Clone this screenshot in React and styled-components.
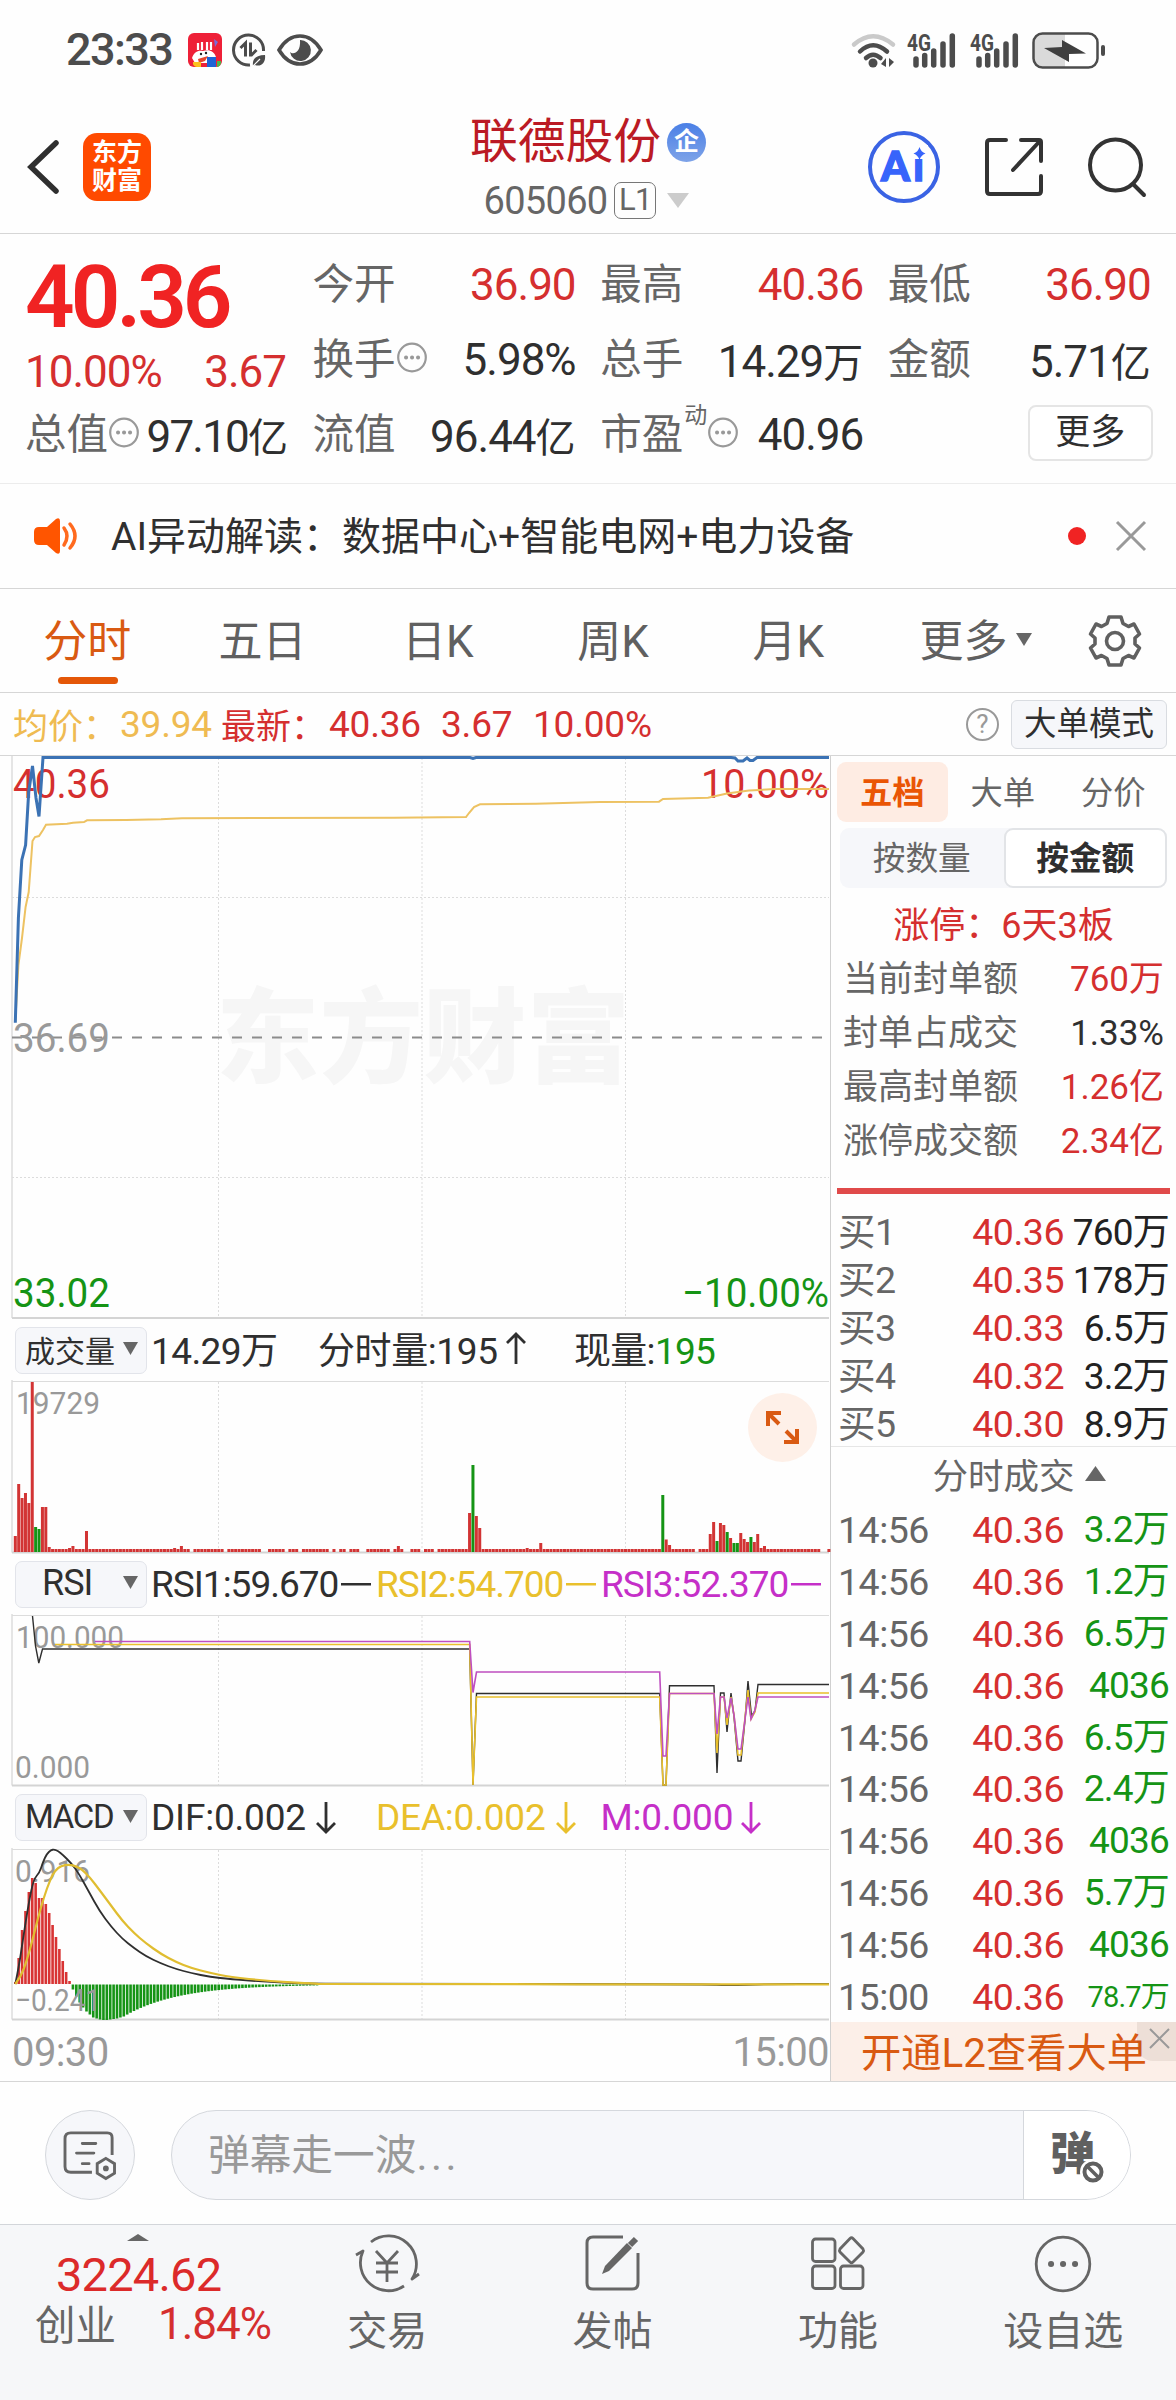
// src/App.jsx
import React from 'react';
import styled, { createGlobalStyle } from 'styled-components';

const RED = '#d52f2f';
const GREEN = '#159415';
const ORANGE = '#d95a12';
const YELLOW = '#e9c02c';
const PURPLE = '#c52fc8';
const DARK = '#2f2f2f';
const GREY = '#666';
const LIGHT = '#999';

const GlobalStyle = createGlobalStyle`
  * { box-sizing: border-box; }
  body {
    margin: 0;
    background: #fff;
    font-family: Roboto, 'Noto Sans CJK SC', sans-serif;
    color: ${DARK};
  }
  svg { display: block; flex: none; overflow: visible; }
`;

const Page = styled.div`
  width: 1176px;
  height: 2400px;
  overflow: hidden;
  background: #fefefe;
  white-space: nowrap;
`;

/* ---------- status bar ---------- */

const StatusBar = styled.div`
  display: flex;
  align-items: center;
  justify-content: space-between;
  height: 100px;
  padding: 0 70px 0 66px;
`;

const StatusGroup = styled.div`
  display: flex;
  align-items: center;
  gap: ${(p) => p.$gap || 10}px;
`;

const Clock = styled.span`
  font-size: 45px;
  letter-spacing: -1.6px;
  font-weight: 500;
  color: #4c4c4c;
  margin-right: 6px;
  line-height: 50px;
`;

/* ---------- header ---------- */

const Header = styled.header`
  display: grid;
  grid-template-columns: 1fr auto 1fr;
  align-items: center;
  height: 134px;
  padding: 0 29px 0 26px;
  border-bottom: 1px solid #d6d6d6;
`;

const HeaderLeft = styled.div`
  display: flex;
  align-items: center;
  gap: 23px;
`;

const Logo = styled.div`
  display: flex;
  flex-direction: column;
  align-items: center;
  justify-content: center;
  width: 68px;
  height: 68px;
  border-radius: 14px;
  background: #ff4a00;
  color: #fff;
  font-size: 25px;
  font-weight: 700;
  line-height: 28px;
`;

const HeaderTitle = styled.div`
  display: flex;
  flex-direction: column;
  align-items: center;
  align-self: start;
  padding-top: 11px;
`;

const NameLine = styled.div`
  display: flex;
  align-items: center;
  gap: 6px;
  height: 60px;
  padding-left: 3px;
  font-size: 47.8px;
  line-height: 54px;
  color: #bb1a24;
`;

const Name = styled.span`
  margin-top: 1px;
`;

const FirmBadge = styled.span`
  width: 39px;
  height: 39px;
  margin-top: 2px;
  border-radius: 50%;
  background: linear-gradient(#4b80e6, #7ea3e8);
  color: #fff;
  font-size: 25px;
  font-weight: 700;
  line-height: 37px;
  text-align: center;
`;

const CodeLine = styled.div`
  display: flex;
  align-items: center;
  height: 59px;
  font-size: 38px;
  letter-spacing: -0.7px;
  color: ${GREY};
`;

const Level = styled.span`
  width: 42px;
  height: 37px;
  margin: 0 11px 0 7px;
  border: 1.5px solid #777;
  border-radius: 7px;
  font-size: 31px;
  line-height: 34px;
  text-align: center;
`;

const HeaderRight = styled.div`
  display: flex;
  align-items: center;
  justify-content: flex-end;
  gap: 45px;
`;

/* ---------- quote summary ---------- */

const Quote = styled.section`
  display: grid;
  grid-template-columns: repeat(4, 262px);
  grid-template-rows: repeat(3, 75px);
  column-gap: 25.6px;
  height: 250px;
  padding: 13px 25px 0;
  border-bottom: 1px solid #ececec;
`;

const PriceBlock = styled.div`
  grid-row: span 2;
`;

const Price = styled.div`
  height: 99px;
  font-size: 87px;
  font-weight: 600;
  line-height: 100px;
  letter-spacing: -4px;
  color: #f02323;
`;

const ChangeLine = styled.div`
  display: flex;
  justify-content: space-between;
  height: 51px;
  padding-right: 1px;
  font-size: 44px;
  line-height: 53px;
  letter-spacing: -1px;
  color: ${RED};
`;

const Cell = styled.div`
  display: flex;
  align-items: center;
  color: ${GREY};
`;

const CellName = styled.span`
  height: 66px;
  font-size: 41.5px;
  line-height: 66px;
`;

const CellValue = styled.span`
  margin: 1px -1px 0 auto;
  font-size: 44px;
  letter-spacing: ${(p) => p.$spacing || -1}px;
  color: ${(p) => p.$color || DARK};
`;

const Unit = styled.span`
  font-size: 40px;
  letter-spacing: 0;
`;

const Sup = styled.sup`
  align-self: flex-start;
  margin: 4px 0 0 1px;
  font-size: 23px;
  line-height: 30px;
`;

const MoreButton = styled.button`
  align-self: center;
  justify-self: end;
  width: 125px;
  height: 56px;
  margin: -3px -3px 0 0;
  padding: 0;
  border: 2px solid #e5e5e5;
  border-radius: 8px;
  background: #fff;
  font: 35px Roboto, 'Noto Sans CJK SC', sans-serif;
  line-height: 46px;
  color: ${DARK};
`;

/* ---------- notice ---------- */

const Notice = styled.div`
  display: flex;
  align-items: center;
  height: 105px;
  padding: 0 30px 0 33px;
  border-bottom: 1px solid #d6d6d6;
  font-size: 39px;
`;

const NoticeText = styled.span`
  margin: -7px 0 0 32px;
`;

const Dot = styled.i`
  width: 18px;
  height: 18px;
  margin: 0 30px 0 auto;
  border-radius: 50%;
  background: #f02323;
`;

/* ---------- period tabs ---------- */

const Periods = styled.nav`
  display: flex;
  align-items: center;
  height: 104px;
  border-bottom: 1px solid #d6d6d6;
`;

const Period = styled.span`
  position: relative;
  display: flex;
  align-items: center;
  justify-content: center;
  gap: 9px;
  width: ${(p) => p.$width || 175.3}px;
  height: 100%;
  padding: 0 1px 5px 0;
  font-size: 44px;
  color: ${(p) => (p.$active ? ORANGE : '#606060')};

  svg {
    margin-top: 3px;
  }

  &::after {
    content: '';
    display: ${(p) => (p.$active ? 'block' : 'none')};
    position: absolute;
    bottom: 8px;
    left: 57.5px;
    width: 60px;
    height: 7px;
    border-radius: 4px;
    background: #e45708;
  }
`;

const Gear = styled.svg`
  margin-left: 11px;
`;

const InfoBar = styled.div`
  display: flex;
  align-items: center;
  height: 63px;
  padding: 0 9px 0 13px;
  border-bottom: 1px solid #d6d6d6;
  font-size: 37px;
  color: ${RED};
`;

const InfoLabel = styled.span`
  width: ${(p) => p.$width}px;
  margin-top: -2px;
  font-size: 35px;
  color: ${(p) => p.$color};
`;

const InfoValue = styled.span`
  width: ${(p) => p.$width}px;
  letter-spacing: -0.2px;
  color: ${(p) => p.$color};
`;

const Help = styled.span`
  width: 33px;
  height: 33px;
  margin: 0 12px 0 auto;
  border: 2.5px solid ${LIGHT};
  border-radius: 50%;
  font-size: 26px;
  line-height: 28px;
  text-align: center;
  color: ${LIGHT};
`;

const ModeButton = styled.span`
  width: 156px;
  height: 49px;
  border: 1px solid #d9dce1;
  border-radius: 6px;
  background: #f6f7fa;
  font-size: 32.5px;
  line-height: 47px;
  text-align: center;
  color: ${DARK};
`;

/* ---------- main area ---------- */

const Main = styled.main`
  display: flex;
  height: 1326px;
  border-bottom: 1px solid #d6d6d6;
`;

const Charts = styled.div`
  width: 831px;
  border-right: 1px solid #d0d0d0;
`;

const ChartBox = styled.div`
  position: relative;
`;

const IndicatorBar = styled.div`
  display: flex;
  align-items: center;
  height: ${(p) => p.$height || 60}px;
  padding-left: 15px;
  font-size: 37px;
`;

const Picker = styled.span`
  display: flex;
  align-items: center;
  justify-content: space-between;
  width: 132px;
  height: 47px;
  margin-right: 4px;
  padding: 0 8px 3px ${(p) => p.$pad || 9}px;
  border: 1.5px solid #e2e4ea;
  border-radius: 7px;
  background: #f6f7fa;
  font-size: ${(p) => p.$size || 35}px;
  letter-spacing: ${(p) => p.$spacing || 0}px;
`;

const Reading = styled.span`
  display: flex;
  align-items: center;
  gap: ${(p) => p.$gap || 4}px;
  width: ${(p) => p.$width}px;
  margin-top: ${(p) => p.$lift || 0}px;
  letter-spacing: ${(p) => p.$spacing || 0}px;
  color: ${(p) => p.$color};
`;

const GreenText = styled.span`
  color: ${GREEN};
`;

const ExpandButton = styled.span`
  position: absolute;
  top: 13px;
  right: 13px;
  width: 69px;
  height: 69px;
  padding: 17px;
  border-radius: 50%;
  background: #fef0e8;
`;

const TimeAxis = styled.div`
  display: flex;
  align-items: center;
  justify-content: space-between;
  height: 60px;
  padding: 2px 1px 0 12px;
  font-size: 40px;
  letter-spacing: -0.6px;
  color: ${LIGHT};
`;

/* ---------- order book ---------- */

const Book = styled.aside`
  flex: 1;
  display: flex;
  flex-direction: column;
`;

const BookTabs = styled.div`
  display: flex;
  padding: 6px 6px 0;
`;

const BookTab = styled.span`
  width: 110.5px;
  height: 60px;
  border-radius: 9px;
  background: ${(p) => (p.$active ? '#feece3' : 'none')};
  font-size: 32.3px;
  font-weight: ${(p) => (p.$active ? 700 : 400)};
  line-height: 62px;
  text-align: center;
  color: ${(p) => (p.$active ? '#ea5504' : GREY)};
`;

const Segment = styled.div`
  display: flex;
  width: 327px;
  margin: 6px 0 0 9px;
  border-radius: 9px;
  background: #f6f7fa;
`;

const SegmentItem = styled.span`
  flex: 1;
  height: 60px;
  border: 2px solid ${(p) => (p.$active ? '#e2e4e7' : 'transparent')};
  border-radius: 9px;
  background: ${(p) => (p.$active ? '#fff' : 'none')};
  font-size: 32.7px;
  font-weight: ${(p) => (p.$active ? 700 : 400)};
  line-height: 59px;
  text-align: center;
  color: ${(p) => (p.$active ? DARK : GREY)};
`;

const LimitLine = styled.div`
  height: 52px;
  margin-top: 12px;
  font-size: 36px;
  line-height: 53px;
  text-align: center;
  color: ${RED};
`;

const StatRow = styled.div`
  display: flex;
  justify-content: space-between;
  height: 54px;
  padding: 0 12px 0 12px;
  font-size: 35px;
  line-height: 56px;
  color: ${GREY};
`;

const StatValue = styled.span`
  color: ${(p) => p.$color};
`;

const Ratio = styled.div`
  width: 333px;
  height: 6px;
  margin: 20px 0 14px 6px;
  background: #e04a4a;
`;

const Rows = styled.div`
  height: ${(p) => p.$height}px;
`;

const BookRow = styled.div`
  display: grid;
  grid-template-columns: 122px 104px 1fr;
  height: ${(p) => p.$height}px;
  padding: 0 7px 0 7px;
  font-size: 37.5px;
  line-height: ${(p) => p.$height + 1}px;
  letter-spacing: -0.5px;
  color: ${GREY};
`;

const BookPrice = styled.span`
  text-align: right;
  color: ${RED};
`;

const BookVolume = styled.span`
  text-align: right;
  font-size: ${(p) => p.$size || 37}px;
  letter-spacing: -0.8px;
  color: ${(p) => p.$color};
`;

const TradesTitle = styled.div`
  display: flex;
  align-items: center;
  justify-content: center;
  gap: 10px;
  height: 58px;
  padding: 0 0 5px 31px;
  border-top: 1px solid #e6e6e6;
  font-size: 35.5px;
  color: ${GREY};
`;

const Promo = styled.div`
  position: relative;
  height: 59px;
  padding-left: 30px;
  background: #fcefe8;
  font-size: 40.3px;
  line-height: 64px;
  color: ${ORANGE};
`;

const PromoClose = styled.span`
  position: absolute;
  top: 0;
  right: 0;
  width: 39px;
  height: 39px;
  padding: 6px 0 0 12px;
  border-bottom-left-radius: 16px;
  background: rgba(60, 40, 30, 0.08);
`;

/* ---------- comment bar and bottom nav ---------- */

const CommentBar = styled.div`
  display: flex;
  align-items: center;
  height: 143px;
  padding: 4px 45px 0;
  border-bottom: 1px solid #d3d6da;
`;

const RoundButton = styled.span`
  display: flex;
  align-items: center;
  justify-content: center;
  width: 90px;
  height: 90px;
  border: 1.5px solid #d5d8dd;
  border-radius: 50%;
  background: #f6f7fa;
`;

const Field = styled.div`
  display: flex;
  flex: 1;
  height: 90px;
  margin-left: 36px;
  border: 1.5px solid #d5d8dd;
  border-radius: 45px;
  background: #f6f7fa;
  overflow: hidden;
`;

const Placeholder = styled.span`
  flex: 1;
  padding-left: 36px;
  font-size: 41.7px;
  line-height: 90px;
  color: ${LIGHT};
`;

const Ellipsis = styled.span`
  letter-spacing: 3.5px;
`;

const Toggle = styled.span`
  position: relative;
  width: 107px;
  padding-left: 26px;
  border-left: 1.5px solid #d5d8dd;
  background: #fff;
  font-size: 45px;
  font-weight: 900;
  line-height: 88px;
  color: #606060;
`;

const BanIcon = styled.svg`
  position: absolute;
  left: 56px;
  top: 48px;
`;

const BottomNav = styled.nav`
  display: flex;
  height: 175px;
  background: #f6f7f9;
`;

const IndexBox = styled.div`
  width: 274px;
  padding-top: 9px;
`;

const Arrow = styled.svg`
  margin-left: 127px;
`;

const IndexValue = styled.div`
  height: 66px;
  padding-left: 56px;
  font-size: 47px;
  line-height: 68px;
  letter-spacing: -0.8px;
  color: #dc2a2a;
`;

const IndexLine = styled.div`
  display: flex;
  align-items: center;
  height: 31px;
  padding-left: 35px;
  font-size: 40.5px;
  color: ${GREY};
`;

const IndexChange = styled.span`
  margin: 3px 0 0 42px;
  font-size: 44px;
  letter-spacing: -1px;
  color: ${RED};
`;

const NavItem = styled.div`
  display: flex;
  flex-direction: column;
  align-items: center;
  width: 225.4px;
  padding: 8px 0 0 1px;
  font-size: 40px;
  line-height: 56px;
  color: ${GREY};
`;

const NavLabel = styled.span`
  margin-top: 11px;
`;

/* ---------- data ---------- */

const periods = ['分时', '五日', '日K', '周K', '月K'];

const stats = [
  ['当前封单额', '760万', RED],
  ['封单占成交', '1.33%', DARK],
  ['最高封单额', '1.26亿', RED],
  ['涨停成交额', '2.34亿', RED],
];

const bids = [
  ['买1', '40.36', '760万'],
  ['买2', '40.35', '178万'],
  ['买3', '40.33', '6.5万'],
  ['买4', '40.32', '3.2万'],
  ['买5', '40.30', '8.9万'],
];

const trades = [
  ['14:56', '3.2万'],
  ['14:56', '1.2万'],
  ['14:56', '6.5万'],
  ['14:56', '4036'],
  ['14:56', '6.5万'],
  ['14:56', '2.4万'],
  ['14:56', '4036'],
  ['14:56', '5.7万'],
  ['14:56', '4036'],
  ['15:00', '78.7万'],
];

const STEP = 3.39;
const barX = (i) => 15.3 + i * STEP;
const GRID_X = [218.5, 422, 625.5];

const priceLine =
  '15.3,266.7 18.4,162 21.8,104 25.6,89 28.7,36 32.5,10 36,42 39,60.5 43,1.5 470,1.5 473,2.5 476,1.5 731,1.5 735,2 738,5 743,5 747,2 750,4.5 753,4.5 757,1.5 829,1.5';
const avgLine =
  '15.3,266 18.4,209 22,182 25.6,151 28.7,136 32.5,85 35,81 39,80 43,74 46,68.7 67,67.7 73,66.7 84,66 87,64.3 126,64 161,63.3 182,62.3 394,61.7 466,61 469,57 474,51 480,48.3 536,47.7 600,46 659,45.7 663,43 708,41.7 727,37.4 749,34.6 775,33 829,33';

const rsiBlack =
  '32.5,2 35.5,32 38.8,49 42.5,35 469.7,35 473,171 476.5,79.5 659.7,79.5 663,171 666,171 669.5,71.7 714,71.7 717,159 720.5,79 724,79 727,118 731,79 734,103 738,147 741,147 745,106 748,67 751.5,102 755,97 758,70.5 829,70.5';
const rsiYellow =
  '55,30.5 469.7,30.5 473,171 476.5,83 659.7,83 663,171 666,171 669.5,79.5 714,79.5 717,139 720.5,83 724,83 727,111 731,83 734,101 738,141 741,141 748,76 751,105 755,98 758,79 829,79';
const rsiPurple =
  '95,27.5 469.7,27.5 473,78.5 476.5,58 659.7,58 663,142 666,142 669.5,79.5 714,79.5 717,120 720.5,83 724,83 727,104 731,84 734,101 738,135 741,135 748,83 751,105 755,96 758,83 829,83';

// bar index -> [height, is green]
const volumes = {
  0: [16], 1: [68], 2: [54], 3: [59], 4: [49], 5: [170], 6: [25, 1], 7: [23, 1], 8: [45], 9: [45],
  10: [5], 16: [4], 17: [6], 21: [21], 47: [4], 49: [6], 113: [6],
  134: [39], 135: [87, 1], 136: [36], 137: [24], 151: [4], 155: [9],
  191: [57, 1], 192: [12.5], 193: [7],
  205: [18], 206: [30], 207: [11, 1], 208: [29], 209: [27], 210: [20, 1], 211: [14],
  212: [9, 1], 213: [9, 1], 214: [19], 215: [13], 216: [10], 217: [15, 1], 218: [10],
  219: [18], 220: [4], 221: [6],
};
const noVolume = [52, 62, 73, 74, 80, 84, 93, 95, 98, 102, 103, 111, 115, 116, 120, 124, 201, 238, 239];

const macdUp = [2, 26, 54, 73, 92, 106, 101, 86, 86, 80, 71, 59, 47, 35, 23, 12, 3];
const macdDown = [5, 12, 18, 23, 27, 30, 33, 34, 35, 35.5, 35.5, 35, 34.5, 34, 33];
for (let i = 32; i < 90; i += 1) macdDown.push(32 * Math.exp(-(i - 32) / 16));

const dif = [
  [15.3, 136], [19, 118], [23, 91], [28.7, 55], [33.7, 31], [39.4, 25], [43, 14], [46.7, 6], [51, 2],
  [54.3, 1.5], [58, 3], [63, 7], [71, 15], [78.5, 25], [89, 44], [99.5, 63], [111, 78.5], [122.5, 91],
  [134, 100], [145.5, 108], [161, 115.5], [176, 121], [191, 125], [210.5, 129], [230, 131],
  [268, 134], [306, 135.5], [345, 136], [708, 136], [725, 137.5], [770, 136], [829, 136],
];
const dea = [
  [15.3, 136], [21, 128.5], [27, 112], [32.5, 92], [38, 70], [44, 49], [50, 32], [55.5, 22], [61, 18],
  [69, 16.3], [76.5, 18.5], [82, 21.5], [90, 29.5], [99.5, 42], [111, 57.5], [122.5, 73], [134, 85],
  [145.5, 95], [161, 106], [176, 114], [191, 120], [210.5, 125], [230, 129], [268, 133], [306, 135.3],
  [330, 136.3], [829, 136.3],
];

// smooth curve through the midpoints of neighbouring points
const curve = (pts) => {
  let d = `M${pts[0][0]} ${pts[0][1]}`;
  for (let i = 1; i < pts.length - 1; i += 1) {
    const [x, y] = pts[i];
    const [nx, ny] = pts[i + 1];
    d += ` Q${x} ${y} ${(x + nx) / 2} ${(y + ny) / 2}`;
  }
  const last = pts[pts.length - 1];
  return `${d} L${last[0]} ${last[1]}`;
};

/* ---------- small drawings ---------- */

const Triangle = ({ w, h, up, color = GREY }) => (
  <svg width={w} height={h}>
    <path d={up ? `M0 ${h}H${w}L${w / 2} 0z` : `M0 0H${w}L${w / 2} ${h}z`} fill={color} />
  </svg>
);

const MoreDots = () => (
  <svg width="30" height="34" viewBox="-1 -2 30 34" fill="none" stroke={LIGHT}>
    <circle cx="15" cy="12.5" r="13.8" strokeWidth="2.2" />
    <path d="M9 12.5h.1M15 12.5h.1M21 12.5h.1" strokeWidth="4" strokeLinecap="round" />
  </svg>
);

const Cross = ({ size, width = 2.5 }) => (
  <svg width={size} height={size} viewBox={`0 0 ${size} ${size}`} stroke={LIGHT} strokeWidth={width}>
    <path d={`M1 1L${size - 1} ${size - 1}M${size - 1} 1L1 ${size - 1}`} />
  </svg>
);

const TrendArrow = ({ color, up }) => (
  <svg width="20" height="32" viewBox="0 0 20 32" fill="none" stroke={color} strokeWidth="2.8">
    <path d={up ? 'M10 32V2M1 11l9-9 9 9' : 'M10 0v30M1 21l9 9 9-9'} />
  </svg>
);

const Signal = () => (
  <svg width="52" height="35" viewBox="0 0 52 35">
    <text x="1" y="17.5" fontSize="23" fontWeight="700" fill="#4c4c4c" textLength="24" lengthAdjust="spacingAndGlyphs">
      4G
    </text>
    <path d="M10 26v6M18.7 22.5v9.5M27.7 18v14M37 11v21M46.3 3v29" stroke="#4c4c4c" strokeWidth="5.5" strokeLinecap="round" />
  </svg>
);

const Grid = ({ height, bottom }) => (
  <g stroke="#dcdcdc" strokeWidth="1">
    {GRID_X.map((x) => (
      <path key={x} d={`M${x} 2V${bottom}`} strokeDasharray="2 2" />
    ))}
    <path d={`M12 0V${bottom}`} strokeWidth="1.5" />
    <path d={`M12 ${bottom}H829`} strokeWidth="2" stroke="#d4d4d4" />
    {height && <path d="M12 1.5H829" />}
  </g>
);

const Label = ({ x, y, w, size = 31.5, color = LIGHT, children }) => (
  <text x={x} y={y} fontSize={size} fill={color} textLength={w} lengthAdjust="spacingAndGlyphs">
    {children}
  </text>
);

const PriceChart = () => (
  <svg width="830" height="564" fill="none">
    <text x="216" y="319" fontSize="103" fontWeight="900" fill="#f6f6f6" textLength="414">
      东方财富
    </text>
    <Grid bottom={562} />
    <path d="M12 141.5H829M12 421.5H829" stroke="#dcdcdc" strokeDasharray="2 2" />
    <path d="M12 281.5H829" stroke="#8c8c8c" strokeWidth="2" strokeDasharray="10 10" />
    <Label x={13} y={42} w={97} size={41} color={RED}>40.36</Label>
    <Label x={701} y={42} w={128} size={41} color={RED}>10.00%</Label>
    <Label x={13} y={296} w={97} size={41}>36.69</Label>
    <Label x={13} y={551} w={97} size={41} color={GREEN}>33.02</Label>
    <Label x={682} y={551} w={147} size={41} color={GREEN}>−10.00%</Label>
    <polyline points={avgLine} stroke="#edc262" strokeWidth="2" />
    <polyline points={priceLine} stroke="#3b72b4" strokeWidth="3" />
  </svg>
);

const VolumeChart = () => (
  <svg width="830" height="174">
    <Grid height={174} bottom={172.5} />
    <Label x={16} y={34} w={84}>19729</Label>
    {Array.from({ length: 241 }, (_, i) => {
      if (noVolume.includes(i)) return null;
      const [h, green] = volumes[i] || [3];
      return (
        <rect key={i} x={barX(i) - 1.5} y={172 - h} width="3" height={h} fill={green ? GREEN : '#d23434'} />
      );
    })}
  </svg>
);

const RsiChart = () => (
  <svg width="830" height="173" fill="none">
    <Grid height={173} bottom={171.5} />
    <Label x={16} y={34} w={108}>100.000</Label>
    <Label x={15} y={164} w={75}>0.000</Label>
    <polyline points={rsiBlack} stroke={DARK} strokeWidth="1.4" />
    <polyline points={rsiYellow} stroke={YELLOW} strokeWidth="1.6" />
    <polyline points={rsiPurple} stroke="#bf4fc0" strokeWidth="1.6" />
  </svg>
);

const MacdChart = () => (
  <svg width="830" height="173" fill="none">
    <Grid height={173} bottom={171.5} />
    {macdUp.map((h, i) => (
      <rect key={i} x={barX(i) - 1.3} y={136 - h} width="2.6" height={h} fill="#d83434" />
    ))}
    {macdDown.map((h, i) => (
      <rect key={i} x={barX(i + 17) - 1.3} y="136.5" width="2.6" height={h} fill={GREEN} />
    ))}
    <Label x={15} y={34} w={75}>0.916</Label>
    <Label x={15} y={163} w={86}>−0.241</Label>
    <path d={curve(dif)} stroke={DARK} strokeWidth="1.8" />
    <path d={curve(dea)} stroke="#e0bd30" strokeWidth="2.2" />
  </svg>
);

const Value = ({ text, color, spacing }) => {
  const unit = /[万亿]$/.test(text) ? text.slice(-1) : '';
  return (
    <CellValue $color={color} $spacing={spacing}>
      {unit ? text.slice(0, -1) : text}
      {unit && <Unit>{unit}</Unit>}
    </CellValue>
  );
};

const Stat = ({ name, sup, dots, ...value }) => (
  <Cell>
    <CellName>{name}</CellName>
    {sup && <Sup>{sup}</Sup>}
    {dots && <MoreDots />}
    <Value {...value} />
  </Cell>
);

/* ---------- sections ---------- */

const Status = () => (
  <StatusBar>
    <StatusGroup>
      <Clock>23:33</Clock>
      <svg width="34" height="34" viewBox="0 0 34 34">
        <rect width="34" height="34" rx="6" fill="#ee2038" />
        <path d="M10 10v7M14 9v8M19 9v8M23 9v8" stroke="#fff" strokeWidth="2.2" />
        <path d="M26 6l4 3-3 5z" fill="#7a6bd8" />
        <path d="M4 25c2-6 6-8 11-7 6-2 11 0 13 6l-3 6H7z" fill="#fff" />
        <path d="M10 26l10-3-3 5-6 2z" fill="#e8452c" />
        <circle cx="13" cy="21" r="1.2" fill="#222" />
        <circle cx="18" cy="20" r="1.2" fill="#222" />
        <path d="M5 29h8v5H9q-3 0-4-3z" fill="#fbc21d" />
        <path d="M19 24h9v10h-9z" fill="#1f63d6" />
        <path d="M29 28h4v2q-1 4-4 4z" fill="#49b84e" />
      </svg>
      <svg width="34" height="34" viewBox="0 0 34 34" fill="none" stroke="#4c4c4c" strokeWidth="3">
        <path d="M18 32A15 15 0 1 1 31.5 18" />
        <path d="M8.5 15l5-5v13.5M18.5 9.5V22h1l5-5" strokeWidth="3" />
        <path d="M21 33c-1-7 3-11 12-11 1 8-4 12-10 10" fill="#4c4c4c" stroke="none" />
        <path d="M20 34l8-8" stroke="#fff" strokeWidth="1.2" />
      </svg>
      <svg width="46" height="32" viewBox="-1 0 46 32" fill="none" stroke="#4c4c4c" strokeWidth="3.6">
        <path d="M2 16C8 6 15 2 23 2s15 4 21 14C38 26 31 30 23 30S8 26 2 16z" />
        <path d="M23 6a10.500 10.500 0 1 1-10 12c3 3 11 1 10-12z" fill="#4c4c4c" stroke="none" />
      </svg>
    </StatusGroup>
    <StatusGroup $gap={11}>
      <svg width="45" height="35" viewBox="-1 0 45 35" fill="none" stroke="#4c4c4c" strokeWidth="4.5" strokeLinecap="round">
        <path d="M3 11.500Q22 -5 42 11.500" stroke="#cacaca" />
        <path d="M9 18.500Q22 6 36 18.500M15 25Q22 18.500 29.500 25" />
        <circle cx="22" cy="30" r="4.5" fill="#4c4c4c" stroke="none" />
        <path d="M30 31l5-6v9zM43 29l-5-4v9z" fill="#4c4c4c" stroke="none" />
      </svg>
      <Signal />
      <Signal />
      <svg width="74" height="37" viewBox="0 0 74 37">
        <path d="M10 2h23v33H10q-8 0-8-9V11q0-9 8-9z" fill="#dadada" />
        <rect x="1.5" y="1.5" width="64" height="34" rx="9" fill="none" stroke="#4c4c4c" strokeWidth="2.5" />
        <path d="M12 16l18-1V8l24 13.500-17 .5v8z" fill="#3f3f3f" />
        <rect x="69" y="13" width="4" height="11" rx="2" fill="#4c4c4c" />
      </svg>
    </StatusGroup>
  </StatusBar>
);

const TopHeader = () => (
  <Header>
    <HeaderLeft>
      <svg width="34" height="56" viewBox="0 0 34 56" fill="none" stroke="#2f2f2f" strokeWidth="5.5" strokeLinecap="round" strokeLinejoin="miter">
        <path d="M30 4L5 28l25 24" />
      </svg>
      <Logo>
        <span>东方</span>
        <span>财富</span>
      </Logo>
    </HeaderLeft>
    <HeaderTitle>
      <NameLine>
        <Name>联德股份</Name>
        <FirmBadge>企</FirmBadge>
      </NameLine>
      <CodeLine>
        605060<Level>L1</Level>
        <Triangle w={22} h={15} color="#ccc" />
      </CodeLine>
    </HeaderTitle>
    <HeaderRight>
      <svg width="72" height="72" viewBox="0 0 72 72">
        <circle cx="36" cy="36" r="34" fill="none" stroke="#3a63e4" strokeWidth="4" />
        <text x="13" y="50" fontSize="41" fontWeight="900" fontFamily="Lato, sans-serif" fill="#3764fb" stroke="#3764fb" strokeWidth="1.5" textLength="43" lengthAdjust="spacing">
          Ai
        </text>
        {/* the i carries a sparkle in place of its dot */}
        <rect x="43" y="14" width="17" height="14" fill="#fefefe" />
        <path d="M51.500 16q1.500 5 6 6.500-4.500 1.500-6 6.500-1.500-5-6-6.500 4.500-1.500 6-6.500z" fill="#3764fb" />
      </svg>
      <svg width="58" height="58" viewBox="0 0 58 58" fill="none" stroke="#333" strokeWidth="4" strokeLinecap="round">
        <path d="M21 2H5Q2 2 2 5v48q0 3 3 3h48q3 0 3-3V38M36 2h18q2 0 2 2v19M54 4L28 32" />
      </svg>
      <svg width="59" height="60" viewBox="0 0 59 60" fill="none" stroke="#333" strokeWidth="4" strokeLinecap="round">
        <circle cx="27.5" cy="28" r="25.5" />
        <path d="M46 48l10 10" />
      </svg>
    </HeaderRight>
  </Header>
);

const QuoteSummary = () => (
  <Quote>
    <PriceBlock>
      <Price>40.36</Price>
      <ChangeLine>
        <span>10.00%</span>
        <span>3.67</span>
      </ChangeLine>
    </PriceBlock>
    <Stat name="今开" text="36.90" color={RED} />
    <Stat name="最高" text="40.36" color={RED} />
    <Stat name="最低" text="36.90" color={RED} />
    <Stat name="换手" dots text="5.98%" />
    <Stat name="总手" text="14.29万" />
    <Stat name="金额" text="5.71亿" />
    <Stat name="总值" dots text="97.10亿" spacing={-1.8} />
    <Stat name="流值" text="96.44亿" />
    <Stat name="市盈" sup="动" dots text="40.96" />
    <MoreButton>更多</MoreButton>
  </Quote>
);

const OrderBook = () => (
  <Book>
    <BookTabs>
      <BookTab $active>五档</BookTab>
      <BookTab>大单</BookTab>
      <BookTab>分价</BookTab>
    </BookTabs>
    <Segment>
      <SegmentItem>按数量</SegmentItem>
      <SegmentItem $active>按金额</SegmentItem>
    </Segment>
    <LimitLine>涨停：6天3板</LimitLine>
    {stats.map(([label, value, color]) => (
      <StatRow key={label}>
        {label}
        <StatValue $color={color}>{value}</StatValue>
      </StatRow>
    ))}
    <Ratio />
    <Rows $height={238}>
      {bids.map(([label, price, volume]) => (
        <BookRow key={label} $height={48}>
          <span>{label}</span>
          <BookPrice>{price}</BookPrice>
          <BookVolume $color="#222">{volume}</BookVolume>
        </BookRow>
      ))}
    </Rows>
    <TradesTitle>
      分时成交 <Triangle w={21} h={15} up />
    </TradesTitle>
    <Rows $height={518}>
      {trades.map(([time, volume], i) => (
        <BookRow key={i} $height={51.9}>
          <span>{time}</span>
          <BookPrice>40.36</BookPrice>
          <BookVolume $color={GREEN} $size={volume.length > 4 ? 29 : 37}>{volume}</BookVolume>
        </BookRow>
      ))}
    </Rows>
    <Promo>
      开通L2查看大单
      <PromoClose><Cross size={21} width={2} /></PromoClose>
    </Promo>
  </Book>
);

const navIcons = [
  [
    '交易',
    <svg key="t" width="66" height="60" viewBox="0 0 66 60" fill="none" stroke={GREY} strokeWidth="2.8">
      <path d="M17 9A28 28 0 0 1 58 46l7-5M50 53A28 28 0 0 1 9 18l-7 4" strokeLinejoin="round" />
      <path d="M22 18l11 12 11-12M33 30v19M22 30h22M22 39h22" />
    </svg>,
  ],
  [
    '发帖',
    <svg key="p" width="56" height="60" viewBox="0 0 56 60" fill="none" stroke={GREY} strokeWidth="3">
      <path d="M38 4H8Q2 4 2 10v40q0 6 6 6h39q6 0 6-6V20" />
      <path d="M17 41l3-8 22-23 5 5-23 23z" fill={GREY} stroke="none" />
      <path d="M45 12l6-6" strokeWidth="6" />
    </svg>,
  ],
  [
    '功能',
    <svg key="f" width="54" height="60" viewBox="0 0 54 60" fill="none" stroke={GREY} strokeWidth="2.8">
      <rect x="1.5" y="6" width="22.5" height="22.5" rx="3" />
      <rect x="1.5" y="33" width="22.5" height="22.5" rx="3" />
      <rect x="29.5" y="33" width="22.5" height="22.5" rx="3" />
      <path d="M39 5.500q1.500-1.500 3 0l10 10.500q1 1.500 0 3L42 29q-1.500 1.500-3 0L29 19q-1-1.500 0-3z" />
    </svg>,
  ],
  [
    '设自选',
    <svg key="m" width="58" height="60" viewBox="0 0 58 60" fill="none" stroke={GREY}>
      <circle cx="29" cy="31" r="26.8" strokeWidth="2.8" />
      <path d="M17 31h.1M29 31h.1M41 31h.1" strokeWidth="6" strokeLinecap="round" />
    </svg>,
  ],
];

const App = () => (
  <Page>
    <GlobalStyle />
    <Status />
    <TopHeader />
    <QuoteSummary />

    <Notice>
      <svg width="46" height="36" viewBox="0 0 46 36">
        <path d="M6 9h8l9-8q4-2 4 2v30q0 4-4 2l-9-8H6q-5 0-5-5v-8q0-5 5-5z" fill="#ff5500" />
        <path d="M31 10q6 8 0 17M37 6q10 12 0 24" fill="none" stroke="#ff6a1e" strokeWidth="3.5" strokeLinecap="round" />
      </svg>
      <NoticeText>AI异动解读：数据中心+智能电网+电力设备</NoticeText>
      <Dot />
      <Cross size={30} width={3} />
    </Notice>

    <Periods>
      {periods.map((name, i) => (
        <Period key={name} $active={i === 0}>{name}</Period>
      ))}
      <Period $width={200}>
        更多<Triangle w={16} h={13} />
      </Period>
      <Gear width="56" height="54" viewBox="-28 -27 56 54" fill="none" stroke="#606060" strokeWidth="3.6">
        <path
          d="M-6 -24H6L8 -17.500L13.500 -14.500L19 -17L24.500 -7L20 -3V3L24.500 7L19 17L13.500 14.500L8 17.500L6 24H-6L-8 17.500L-13.500 14.500L-19 17L-24.500 7L-20 3V-3L-24.500 -7L-19 -17L-13.500 -14.500L-8 -17.500Z"
          strokeLinejoin="round"
        />
        <circle r="8.5" />
      </Gear>
    </Periods>

    <InfoBar>
      <InfoLabel $width={107} $color="#efbb52">均价：</InfoLabel>
      <InfoValue $width={101} $color="#efbb52">39.94</InfoValue>
      <InfoLabel $width={108}>最新：</InfoLabel>
      <InfoValue $width={112}>40.36</InfoValue>
      <InfoValue $width={92}>3.67</InfoValue>
      <InfoValue $width={125}>10.00%</InfoValue>
      <Help>?</Help>
      <ModeButton>大单模式</ModeButton>
    </InfoBar>

    <Main>
      <Charts>
        <PriceChart />
        <IndicatorBar>
          <Picker $size={30}>
            成交量 <Triangle w={15} h={13} />
          </Picker>
          <Reading $width={167} $spacing={-0.6} $lift={-5}>14.29万</Reading>
          <Reading $width={256} $spacing={-0.4} $gap={8} $lift={-5}>
            分时量:195 <TrendArrow color={DARK} up />
          </Reading>
          <Reading $spacing={-0.7} $lift={-5}>
            <span>现量:<GreenText>195</GreenText></span>
          </Reading>
        </IndicatorBar>
        <ChartBox>
          <VolumeChart />
          <ExpandButton>
            <svg width="35" height="35" viewBox="0 0 35 35" fill="none" stroke={ORANGE} strokeWidth="4">
              <path d="M16 3H3V16M3 3l11 11M19 32h13V19M32 32l-11-11" />
            </svg>
          </ExpandButton>
        </ChartBox>
        <IndicatorBar>
          <Picker $pad={26} $size={36} $spacing={-1}>
            RSI <Triangle w={15} h={13} />
          </Picker>
          <Reading $width={225} $spacing={-1} $gap={3} $color={DARK}>
            RSI1:59.670 <svg width="30" height="3"><rect width="30" height="2.5" fill={DARK} /></svg>
          </Reading>
          <Reading $width={225} $spacing={-1} $gap={3} $color={YELLOW}>
            RSI2:54.700 <svg width="30" height="3"><rect width="30" height="2.5" fill={YELLOW} /></svg>
          </Reading>
          <Reading $width={222} $spacing={-1} $gap={3} $color={PURPLE}>
            RSI3:52.370 <svg width="30" height="3"><rect width="30" height="2.5" fill={PURPLE} /></svg>
          </Reading>
        </IndicatorBar>
        <RsiChart />
        <IndicatorBar $height={61}>
          <Picker $size={33} $spacing={-1.3}>
            MACD <Triangle w={15} h={13} />
          </Picker>
          <Reading $width={225} $spacing={-0.2} $gap={10}>
            DIF:0.002 <TrendArrow color={DARK} />
          </Reading>
          <Reading $width={224.5} $spacing={-0.2} $gap={10} $color={YELLOW}>
            DEA:0.002 <TrendArrow color={YELLOW} />
          </Reading>
          <Reading $width={200} $spacing={-0.2} $gap={8} $color={PURPLE}>
            M:0.000 <TrendArrow color={PURPLE} />
          </Reading>
        </IndicatorBar>
        <MacdChart />
        <TimeAxis>
          <span>09:30</span>
          <span>15:00</span>
        </TimeAxis>
      </Charts>
      <OrderBook />
    </Main>

    <CommentBar>
      <RoundButton>
        <svg width="54" height="50" viewBox="0 -1 56 52" fill="none" stroke={GREY} strokeWidth="3">
          <path d="M30 43H8q-6 0-6-6V8q0-6 6-6h38q5 0 5 5v18" />
          <path d="M20 13h14M14 23h18M20 34h7" strokeLinecap="round" />
          <path d="M44.500 28.500l9 5.500v10l-9 5.500-9-5.500V34z" />
          <circle cx="44.5" cy="39" r="3" fill={GREY} stroke="none" />
        </svg>
      </RoundButton>
      <Field>
        <Placeholder>弹幕走一波<Ellipsis>...</Ellipsis></Placeholder>
        <Toggle>
          弹
          <BanIcon width="26" height="26" viewBox="0 0 26 26">
            <circle cx="13" cy="13" r="13" fill="#fff" />
            <circle cx="13" cy="13" r="8.5" fill="none" stroke="#606060" strokeWidth="4" />
            <path d="M7 7l12 12" stroke="#606060" strokeWidth="3.5" />
          </BanIcon>
        </Toggle>
      </Field>
    </CommentBar>

    <BottomNav>
      <IndexBox>
        <Arrow width="22" height="7"><path d="M0 7H22L11 0z" fill={GREY} /></Arrow>
        <IndexValue>3224.62</IndexValue>
        <IndexLine>
          创业<IndexChange>1.84%</IndexChange>
        </IndexLine>
      </IndexBox>
      {navIcons.map(([name, icon]) => (
        <NavItem key={name}>
          {icon}
          <NavLabel>{name}</NavLabel>
        </NavItem>
      ))}
    </BottomNav>
  </Page>
);

export default App;
